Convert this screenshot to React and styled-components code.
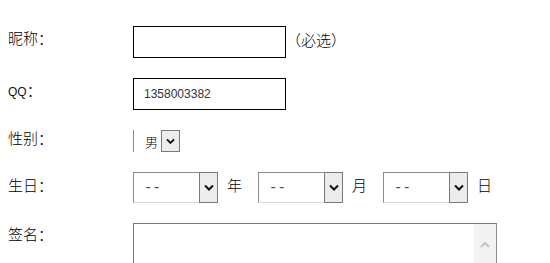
import React from "react";
import styled, { createGlobalStyle } from "styled-components";

const GlobalStyle = createGlobalStyle`
  html, body {
    margin: 0;
    padding: 0;
    overflow: hidden;
    background: #fff;
  }
  body {
    font-family: "Noto Sans CJK SC", "DejaVu Sans", sans-serif;
    font-weight: 300;
    color: #000;
  }
`;

// whole form, one row per field
const Form = styled.div`
  display: flex;
  flex-direction: column;
  gap: 20px;
  padding: 26px 0 0 8px;
`;

const Row = styled.div`
  display: flex;
  align-items: ${({ top }) => (top ? "flex-start" : "center")};
  height: ${({ h }) => h}px;
`;

const Label = styled.div`
  width: 125px;
  flex: 0 0 125px;
  font-size: 15px;
  line-height: 22px;
  margin-bottom: ${({ lift }) => lift || 0}px;
`;

const Latin = styled.span`
  font-family: "Liberation Sans", Arial, sans-serif;
  font-size: 12px;
  font-weight: 400;
  color: #111;
`;

const TextInput = styled.input`
  box-sizing: border-box;
  width: 153px;
  height: 32px;
  border: 1px solid #000;
  padding: 0 10px;
  margin: 0;
  font-family: "Liberation Sans", Arial, sans-serif;
  font-size: 12px;
  color: #333;
  outline: none;
`;

const Hint = styled.span`
  font-size: 15px;
  margin-left: 0px;
  margin-bottom: 6px;
`;

// old-style select imitation: value area + grey arrow button
const Select = styled.div`
  box-sizing: border-box;
  display: flex;
  width: ${({ w }) => w}px;
  height: ${({ h }) => h}px;
  border: ${({ bare }) => (bare ? "none" : "1px solid #8c8c8c")};
  border-left: 1px solid #8c8c8c;
  border-bottom-color: ${({ bare }) => (bare ? "transparent" : "#d8d8d8")};
  background: #fff;
`;

const SelectValue = styled.div`
  flex: 1;
  display: flex;
  align-items: center;
  justify-content: ${({ right }) => (right ? "flex-end" : "flex-start")};
  padding: ${({ right }) => (right ? "0 3px 0 0" : "0 0 0 10px")};
  font-size: ${({ dim }) => (dim ? "14px" : "13px")};
  color: ${({ dim }) => (dim ? "#444" : "#000")};
  font-family: ${({ dim }) =>
    dim ? '"Liberation Mono", monospace' : "inherit"};
`;

const ArrowBox = styled.div`
  box-sizing: border-box;
  width: 19px;
  flex: 0 0 19px;
  margin: ${({ inset }) => (inset ? "-1px -1px -1px 0" : "0")};
  display: flex;
  align-items: center;
  justify-content: center;
  background: #ececec;
  border: 1px solid #7a7a7a;
`;

const Unit = styled.span`
  font-size: 15px;
  margin: 0 16px 6px 9px;
`;

const AreaBox = styled.div`
  box-sizing: border-box;
  display: flex;
  width: 364px;
  height: 70px;
  border: 1px solid #7a7a7a;
  border-right-color: #8a8a8a;
`;

const Area = styled.textarea`
  flex: 1;
  border: none;
  resize: none;
  outline: none;
  margin: 0;
  padding: 2px;
  font-family: inherit;
`;

const Track = styled.div`
  width: 22px;
  flex: 0 0 22px;
  background: #f3f3f3;
  display: flex;
  justify-content: center;
  padding-top: 17px;
  box-sizing: border-box;
`;

const Chevron = ({ up, color = "#111", w = 10 }) => (
  <svg width={w} height={w * 0.7} viewBox="0 0 10 7">
    <polyline
      points={up ? "1,6 5,2 9,6" : "1,1.5 5,5.5 9,1.5"}
      fill="none"
      stroke={color}
      strokeWidth="2"
    />
  </svg>
);

const DateSelect = () => (
  <Select w={85} h={31}>
    <SelectValue dim>--</SelectValue>
    <ArrowBox inset>
      <Chevron />
    </ArrowBox>
  </Select>
);

export default function App() {
  return (
    <>
      <GlobalStyle />
      <Form>
        <Row h={32}>
          <Label lift={8}>昵称：</Label>
          <TextInput />
          <Hint>（必选）</Hint>
        </Row>
        <Row h={32}>
          <Label lift={7}>
            <Latin>QQ</Latin>：
          </Label>
          <TextInput defaultValue="1358003382" />
        </Row>
        <Row h={22}>
          <Label lift={6}>性别：</Label>
          <Select w={47} h={22} bare>
            <SelectValue right>男</SelectValue>
            <ArrowBox>
              <Chevron w={9} />
            </ArrowBox>
          </Select>
        </Row>
        <Row h={31}>
          <Label lift={6}>生日：</Label>
          <DateSelect />
          <Unit>年</Unit>
          <DateSelect />
          <Unit>月</Unit>
          <DateSelect />
          <Unit>日</Unit>
        </Row>
        <Row h={70} top>
          <Label>签名：</Label>
          <AreaBox>
            <Area />
            <Track>
              <Chevron up color="#c4c4c4" w={10} />
            </Track>
          </AreaBox>
        </Row>
      </Form>
    </>
  );
}
